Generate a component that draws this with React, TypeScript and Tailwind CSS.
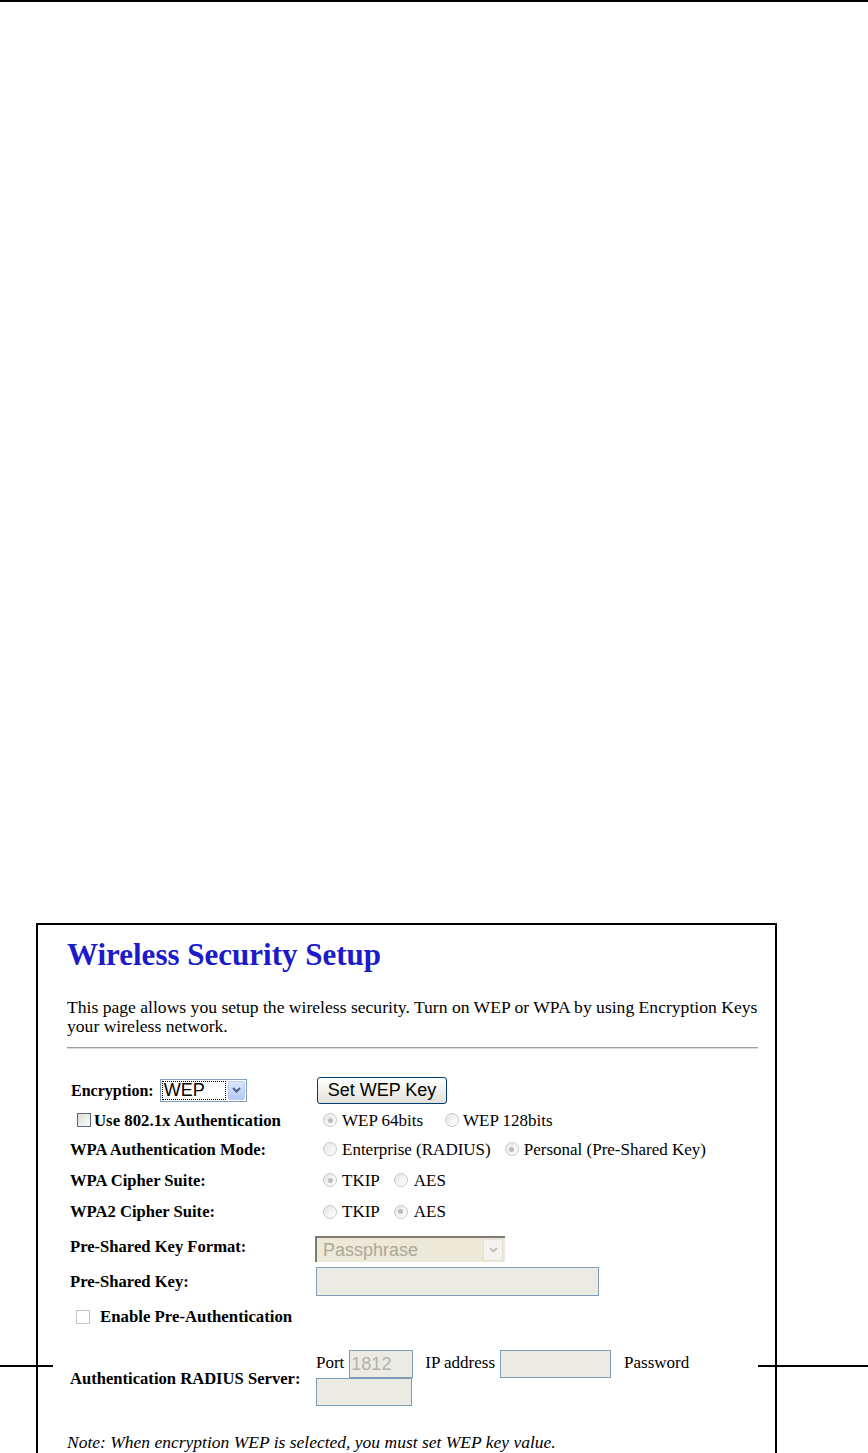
import React from "react";

const serif = "font-['Liberation_Serif','Times_New_Roman',serif]";
const sans = "font-['Liberation_Sans',Arial,sans-serif]";

function Radio({ checked = false, className = "" }: { checked?: boolean; className?: string }) {
  return (
    <span className={`flex h-[14px] w-[14px] shrink-0 items-center justify-center rounded-full border border-[#c9c9c9] bg-linear-to-br from-[#e6e6e6] to-white ${className}`}>
      {checked && <span className="h-[5px] w-[5px] rounded-full bg-[#bdbdbd]" />}
    </span>
  );
}

function Chevron({ color }: { color: string }) {
  return (
    <svg width="9" height="6" viewBox="0 0 9 6">
      <path d="M1 1 L4.5 4.5 L8 1" fill="none" stroke={color} strokeWidth="2" />
    </svg>
  );
}

function Row({ h, children, className = "" }: { h: string; children: React.ReactNode; className?: string }) {
  return <div className={`flex items-center ${h} ${className}`}>{children}</div>;
}

function Label({ children }: { children: React.ReactNode }) {
  return <div className="w-[249px] shrink-0 pl-[3px] text-[16.6px] font-bold leading-[19px]">{children}</div>;
}

export default function App() {
  return (
    <div className={`relative h-[1453px] w-[868px] overflow-hidden bg-white text-black ${serif}`}>
      <div className="h-[2px] w-full bg-black" />
      <div className="ml-[36px] mt-[921px] h-[600px] w-[741px] border-2 border-b-0 border-black pl-[29px] pt-[12px]">
        <div className="w-[691px] overflow-hidden">
          <h1 className="text-[31px] font-bold leading-[36px] text-[#1b1bcc]">Wireless Security Setup</h1>
          <p className="mt-[25px] text-[17.6px] leading-[19px]">
            <span className="block whitespace-nowrap">
              This page allows you setup the wireless security. Turn on WEP or WPA by using Encryption Keys could prevent any unauthorized access to
            </span>
            <span className="block">your wireless network.</span>
          </p>
          <div className="mt-[11px] h-[2px] border-t border-b border-t-[#9c9c9c] border-b-[#dcdcdc]" />

          <div className="mt-[25px] text-[17px] leading-[19px]">
            {/* Row 1 */}
            <Row h="h-[32px]">
              <div className="flex w-[249px] shrink-0 items-center pl-[4px]">
                <span className="text-[16px] font-bold">Encryption:</span>
                <div className="ml-[6px] flex h-[23px] w-[87px] border border-[#7f9db9] bg-white p-px">
                  <div className={`flex flex-1 items-center border border-dotted border-black pl-[1px] text-[18px] leading-[19px] ${sans}`}>WEP</div>
                  <div className="ml-[2px] flex w-[17px] items-center justify-center rounded-[2px] border border-[#b9cdf5] bg-linear-to-b from-[#dbe6fd] to-[#b6c9f6]">
                    <Chevron color="#4d6185" />
                  </div>
                </div>
              </div>
              <button className={`ml-[1px] h-[27px] w-[130px] rounded-[3px] border border-[#003c74] bg-linear-to-b from-white to-[#e2e1d8] text-[18px] leading-[20px] ${sans}`}>
                Set WEP Key
              </button>
            </Row>

            {/* Row 2 */}
            <Row h="h-[28px]">
              <div className="flex w-[249px] shrink-0 items-center pl-[10px]">
                <span className="h-[14px] w-[14px] border border-[#55687d] bg-linear-to-br from-[#dcdcd5] to-white" />
                <span className="ml-[3px] text-[16.8px] font-bold">Use 802.1x Authentication</span>
              </div>
              <Radio checked className="ml-[7px]" />
              <span className="ml-[5px]">WEP 64bits</span>
              <Radio className="ml-[22px]" />
              <span className="ml-[4px]">WEP 128bits</span>
            </Row>

            {/* Row 3 */}
            <Row h="h-[30px]">
              <Label>WPA Authentication Mode:</Label>
              <Radio className="ml-[7px]" />
              <span className="ml-[5px]">Enterprise (RADIUS)</span>
              <Radio checked className="ml-[14px]" />
              <span className="ml-[5px]">Personal (Pre-Shared Key)</span>
            </Row>

            {/* Row 4 */}
            <Row h="h-[32px]">
              <Label>WPA Cipher Suite:</Label>
              <Radio checked className="ml-[7px]" />
              <span className="ml-[5px]">TKIP</span>
              <Radio className="ml-[14px]" />
              <span className="ml-[6px]">AES</span>
            </Row>

            {/* Row 5 */}
            <Row h="h-[31px]">
              <Label>WPA2 Cipher Suite:</Label>
              <Radio className="ml-[7px]" />
              <span className="ml-[5px]">TKIP</span>
              <Radio checked className="ml-[14px]" />
              <span className="ml-[6px]">AES</span>
            </Row>

            {/* Row 6 */}
            <Row h="h-[39px]">
              <Label>Pre-Shared Key Format:</Label>
              <div className="mt-[5px] -ml-[1px] flex h-[26px] w-[190px] border-t-2 border-l-2 border-t-[#7d7b73] border-l-[#7d7b73] bg-[#ece9d8]">
                <div className={`flex flex-1 items-center pl-[6px] text-[18px] leading-[19px] text-[#aca899] ${sans}`}>Passphrase</div>
                <div className="my-[1px] mr-[2px] flex w-[20px] items-center justify-center border border-[#e2e0d6] bg-[#f3f2ec]">
                  <Chevron color="#c4c2b6" />
                </div>
              </div>
            </Row>

            {/* Row 7 */}
            <Row h="h-[31px]">
              <Label>Pre-Shared Key:</Label>
              <div className="h-[29px] w-[283px] border border-[#7f9db9] bg-[#ebebe4]" />
            </Row>

            {/* Row 8 */}
            <Row h="h-[39px]">
              <div className="flex w-[249px] shrink-0 items-center pl-[9px]">
                <span className="h-[14px] w-[14px] border border-[#cac8bb] bg-white" />
                <span className="ml-[10px] text-[16.8px] font-bold">Enable Pre-Authentication</span>
              </div>
            </Row>

            {/* Row 9 */}
            <Row h="h-[56px]" className="mt-[14px]">
              <Label>Authentication RADIUS Server:</Label>
              <div className="flex flex-col">
                <div className="flex h-[28px] items-center">
                  <span className="mb-[4px]">Port</span>
                  <div className={`ml-[5px] flex h-[28px] w-[64px] items-center border border-[#7f9db9] bg-[#ebebe4] pl-[1px] text-[18px] text-[#b3b3ab] ${sans}`}>1812</div>
                  <span className="mb-[4px] ml-[12px]">IP address</span>
                  <div className="ml-[5px] h-[28px] w-[111px] border border-[#7f9db9] bg-[#ebebe4]" />
                  <span className="mb-[4px] ml-[13px]">Password</span>
                </div>
                <div className="h-[28px] w-[96px] border border-[#7f9db9] bg-[#ebebe4]" />
              </div>
            </Row>

            <p className="mt-[27px] text-[17.5px] italic leading-[19px]">
              Note: When encryption WEP is selected, you must set WEP key value.
            </p>
          </div>
        </div>
      </div>

      <div className="absolute left-0 top-[1365px] h-[2px] w-[53px] bg-black" />
      <div className="absolute left-[758px] top-[1365px] h-[2px] w-[110px] bg-black" />
    </div>
  );
}
